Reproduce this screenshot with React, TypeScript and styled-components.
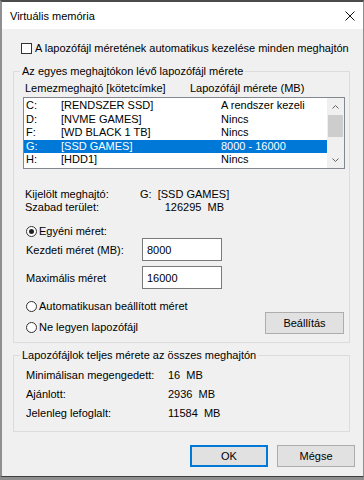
import React from "react";
import styled, { createGlobalStyle } from "styled-components";

const GlobalStyle = createGlobalStyle`
  html, body {
    margin: 0;
    padding: 0;
    background: #8e8e8e;
  }
  body {
    font-family: "Liberation Sans", Arial, sans-serif;
    font-size: 11px;
    color: #000;
  }
  * {
    box-sizing: border-box;
  }
`;

const Frame = styled.div`
  width: 364px;
  height: 480px;
  overflow: hidden;
  background: #8e8e8e;
`;

const Window = styled.div`
  display: flex;
  flex-direction: column;
  height: 477px;
  border-top: 2px solid #4b4b4b;
  border-left: 2px solid #8f8f8f;
  border-right: 1px solid #8f8f8f;
  border-bottom: 1px solid #3f3f3f;
  background: #f0f0f0;
`;

const TitleBar = styled.div`
  display: flex;
  align-items: center;
  justify-content: space-between;
  height: 27px;
  padding: 0 8px;
  background: #fff;
`;

const Title = styled.span`
  font-size: 11px;
`;

const Body = styled.div`
  flex: 1;
  display: flex;
  flex-direction: column;
  padding: 12px 8px 0 11px;
`;

const CheckRow = styled.label`
  display: flex;
  align-items: center;
  gap: 3px;
  height: 14px;
  margin-left: 8px;
  white-space: nowrap;
`;

const CheckBox = styled.span`
  width: 11px;
  height: 11px;
  border: 1px solid #333;
  background: #fff;
`;

const GroupBox = styled.fieldset<{ $top: number; $bottom: number; $gap: number }>`
  margin: ${(p) => p.$gap}px 5px 0 0;
  padding: ${(p) => p.$top}px 4px ${(p) => p.$bottom}px 9px;
  border: 1px solid #dcdcdc;
  min-width: 0;
`;

const Legend = styled.legend`
  margin-left: -3px;
  padding: 0 2px;
  line-height: 14px;
`;

const ColumnHeader = styled.div`
  display: grid;
  grid-template-columns: 165px 1fr;
  height: 14px;
  line-height: 14px;
  padding-left: 2px;
`;

const ListBox = styled.div`
  display: flex;
  height: 72px;
  margin-top: 2px;
  border: 1px solid #828790;
  background: #fff;
`;

const Rows = styled.div`
  flex: 1;
  padding-top: 1px;
`;

const DriveRow = styled.div<{ $selected?: boolean }>`
  display: grid;
  grid-template-columns: 35px 160px 1fr;
  height: 13.6px;
  line-height: 13.6px;
  padding-left: 2px;
  white-space: nowrap;
  background: ${(p) => (p.$selected ? "#0078d7" : "transparent")};
  color: ${(p) => (p.$selected ? "#fff" : "#000")};
`;

const ScrollBar = styled.div`
  display: flex;
  flex-direction: column;
  width: 17px;
  background: #f0f0f0;
`;

const ArrowBox = styled.div`
  display: flex;
  align-items: center;
  justify-content: center;
  height: 17px;
`;

const Thumb = styled.div`
  height: 22px;
  margin: 0 1px;
  background: #cdcdcd;
`;

const Track = styled.div`
  flex: 1;
`;

const InfoGrid = styled.div`
  display: grid;
  grid-template-columns: 115px 84px;
  line-height: 13px;
  margin-top: 19px;
  padding-left: 2px;
`;

const Value = styled.span<{ $right?: boolean }>`
  white-space: pre;
  text-align: ${(p) => (p.$right ? "right" : "left")};
`;

const RadioRow = styled.label<{ $gap?: number }>`
  display: flex;
  align-items: center;
  gap: 2px;
  height: 14px;
  margin-top: ${(p) => p.$gap ?? 0}px;
  white-space: nowrap;
`;

const RadioCircle = styled.span<{ $checked?: boolean }>`
  position: relative;
  width: 11px;
  height: 11px;
  border: 1px solid #333;
  border-radius: 50%;
  background: #fff;

  &::after {
    content: "";
    display: ${(p) => (p.$checked ? "block" : "none")};
    position: absolute;
    left: 2px;
    top: 2px;
    width: 5px;
    height: 5px;
    border-radius: 50%;
    background: #222;
  }
`;

const IndentBlock = styled.div`
  margin-left: 3px;
`;

const SizeGrid = styled.div`
  display: grid;
  grid-template-columns: 116px 80px;
  grid-auto-rows: 23px;
  row-gap: 5px;
  align-items: center;
`;

const SizeInput = styled.input`
  width: 80px;
  height: 23px;
  padding: 0 4px;
  border: 1px solid #7a7a7a;
  background: #fff;
  font-family: inherit;
  font-size: 11px;
  color: #000;
  outline: none;
`;

const BottomArea = styled.div`
  display: flex;
  align-items: flex-end;
  justify-content: space-between;
  margin: 10px 1px 0 3px;
`;

const RadioStack = styled.div`
  display: flex;
  flex-direction: column;
  gap: 7px;
`;

const Button = styled.button<{ $primary?: boolean; $width?: number }>`
  width: ${(p) => p.$width ?? 78}px;
  height: 22px;
  padding: 0;
  border: 1px solid ${(p) => (p.$primary ? "#0078d7" : "#adadad")};
  box-shadow: ${(p) => (p.$primary ? "inset 0 0 0 1px #0078d7" : "none")};
  background: #e1e1e1;
  font-family: inherit;
  font-size: 11px;
  color: #000;
`;

const TotalsGrid = styled.div`
  display: grid;
  grid-template-columns: 142px auto;
  grid-auto-rows: 14px;
  row-gap: 5px;
  line-height: 14px;
  margin-left: 3px;
`;

const DialogButtons = styled.div`
  display: flex;
  justify-content: flex-end;
  gap: 9px;
  margin-top: 13px;
`;

const drives = [
  { letter: "C:", label: "[RENDSZER SSD]", size: "A rendszer kezeli" },
  { letter: "D:", label: "[NVME GAMES]", size: "Nincs" },
  { letter: "F:", label: "[WD BLACK 1 TB]", size: "Nincs" },
  { letter: "G:", label: "[SSD GAMES]", size: "8000 - 16000", selected: true },
  { letter: "H:", label: "[HDD1]", size: "Nincs" },
];

const totals = [
  { label: "Minimálisan megengedett:", value: "16  MB" },
  { label: "Ajánlott:", value: "2936  MB" },
  { label: "Jelenleg lefoglalt:", value: "11584  MB" },
];

const Chevron = ({ down }: { down?: boolean }) => (
  <svg width="7" height="4" viewBox="0 0 7 4">
    <polyline
      points={down ? "0.5,0.5 3.5,3.5 6.5,0.5" : "0.5,3.5 3.5,0.5 6.5,3.5"}
      fill="none"
      stroke="#606060"
      strokeWidth="1"
    />
  </svg>
);

const CloseIcon = () => (
  <svg width="10" height="10" viewBox="0 0 10 10">
    <path d="M0.5 0.5 L9.5 9.5 M9.5 0.5 L0.5 9.5" stroke="#111" strokeWidth="1" />
  </svg>
);

const App = () => {
  return (
    <Frame>
      <GlobalStyle />
      <Window>
        <TitleBar>
          <Title>Virtuális memória</Title>
          <CloseIcon />
        </TitleBar>
        <Body>
          <CheckRow>
            <CheckBox />
            A lapozófájl méretének automatikus kezelése minden meghajtón
          </CheckRow>

          <GroupBox $gap={9} $top={3} $bottom={8}>
            <Legend>Az egyes meghajtókon lévő lapozófájl mérete</Legend>
            <ColumnHeader>
              <span>Lemezmeghajtó [kötetcímke]</span>
              <span>Lapozófájl mérete (MB)</span>
            </ColumnHeader>
            <ListBox>
              <Rows>
                {drives.map((d) => (
                  <DriveRow key={d.letter} $selected={d.selected}>
                    <span>{d.letter}</span>
                    <span>{d.label}</span>
                    <span>{d.size}</span>
                  </DriveRow>
                ))}
              </Rows>
              <ScrollBar>
                <ArrowBox>
                  <Chevron />
                </ArrowBox>
                <Thumb />
                <Track />
                <ArrowBox>
                  <Chevron down />
                </ArrowBox>
              </ScrollBar>
            </ListBox>

            <InfoGrid>
              <span>Kijelölt meghajtó:</span>
              <Value>G:  [SSD GAMES]</Value>
              <span>Szabad terület:</span>
              <Value $right>126295  MB</Value>
            </InfoGrid>

            <IndentBlock>
              <RadioRow $gap={10}>
                <RadioCircle $checked />
                Egyéni méret:
              </RadioRow>
              <SizeGrid>
                <span>Kezdeti méret (MB):</span>
                <SizeInput readOnly value="8000" />
                <span>Maximális méret</span>
                <SizeInput readOnly value="16000" />
              </SizeGrid>
            </IndentBlock>

            <BottomArea>
              <RadioStack>
                <RadioRow>
                  <RadioCircle />
                  Automatikusan beállított méret
                </RadioRow>
                <RadioRow>
                  <RadioCircle />
                  Ne legyen lapozófájl
                </RadioRow>
              </RadioStack>
              <Button $width={79}>Beállítás</Button>
            </BottomArea>
          </GroupBox>

          <GroupBox $gap={5} $top={6} $bottom={11}>
            <Legend>Lapozófájlok teljes mérete az összes meghajtón</Legend>
            <TotalsGrid>
              {totals.map((t) => (
                <React.Fragment key={t.label}>
                  <span>{t.label}</span>
                  <Value>{t.value}</Value>
                </React.Fragment>
              ))}
            </TotalsGrid>
          </GroupBox>

          <DialogButtons>
            <Button $primary>OK</Button>
            <Button>Mégse</Button>
          </DialogButtons>
        </Body>
      </Window>
    </Frame>
  );
};

export default App;
